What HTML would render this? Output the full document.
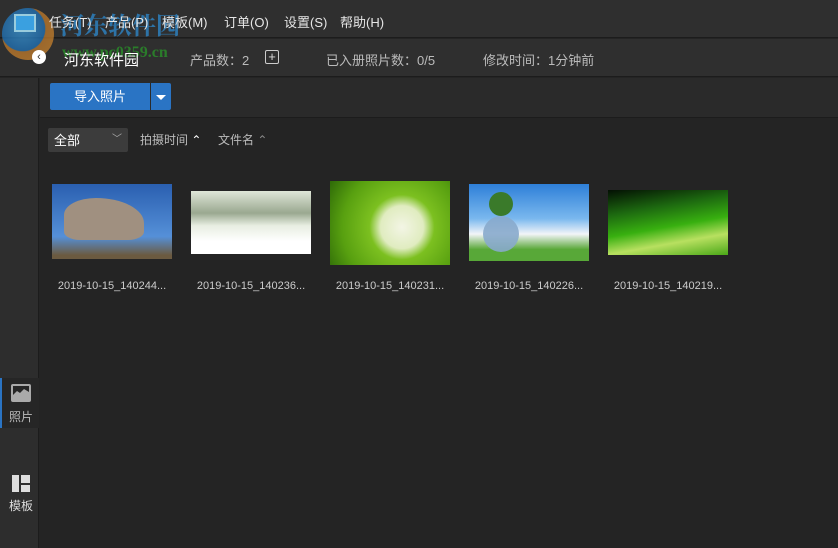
<!DOCTYPE html>
<html><head><meta charset="utf-8"><style>
*{margin:0;padding:0;box-sizing:border-box}
body{width:838px;height:548px;overflow:hidden;background:#242424;font-family:"Liberation Sans","Noto Sans CJK SC",sans-serif;color:#ddd;position:relative;font-size:12px}
.abs{position:absolute}
#menu{left:0;top:0;width:838px;height:38px;background:#2f2f2f;border-bottom:1px solid #1c1c1c}
#bar2{left:0;top:39px;width:838px;height:38px;background:#2f2f2f;border-bottom:1px solid #1c1c1c}
#side{left:0;top:78px;width:39px;height:470px;background:#2d2d2d;border-right:1px solid #1c1c1c}
#tool{left:40px;top:78px;width:798px;height:40px;background:#2a2a2a;border-bottom:1px solid #1c1c1c}
.m{top:12px;font-size:13px;color:#e6e6e6}
.t{font-size:11px;color:#ccc;top:280px;width:140px;text-align:center}
</style></head><body>
<div id="menu" class="abs"></div>
<div id="bar2" class="abs"></div>
<div id="side" class="abs"></div>
<div id="tool" class="abs"></div>
<div class="abs" style="left:2px;top:8px;width:52px;height:52px;border-radius:50%;background:radial-gradient(circle at 40% 40%,#3d9ad8 0,#1f72b8 50%,#c07a2a 52%,#d08a30 100%);opacity:.75"></div>
<div class="abs" style="left:14px;top:14px;width:22px;height:18px;background:#3aa0e0;border:2px solid #9cd"></div>
<div class="abs" style="left:60px;top:6px;font-size:24px;font-weight:bold;color:#2d8ad0;opacity:.75;font-family:'Noto Serif CJK SC',serif">河东软件园</div>
<div class="abs" style="left:62px;top:44px;font-size:16px;font-weight:bold;color:#2a8a2a;opacity:.85;font-family:'Liberation Serif',serif">www.pc0359.cn</div>
<div class="abs m" style="left:49px">任务(T)</div>
<div class="abs m" style="left:105px">产品(P)</div>
<div class="abs m" style="left:162px">模板(M)</div>
<div class="abs m" style="left:224px">订单(O)</div>
<div class="abs m" style="left:284px">设置(S)</div>
<div class="abs m" style="left:340px">帮助(H)</div>
<div class="abs" style="left:32px;top:50px;width:14px;height:14px;border-radius:50%;background:#fff;color:#333;font-size:11px;line-height:14px;text-align:center">‹</div>
<div class="abs" style="left:64px;top:49px;font-size:15px;color:#fff">河东软件园</div>
<div class="abs" style="left:190px;top:50px;font-size:13px;color:#bbb">产品数：2</div>
<div class="abs" style="left:265px;top:50px;width:14px;height:14px;border:1.5px solid #ccc;border-radius:2px;color:#ddd;font-size:13px;line-height:11px;text-align:center">+</div>
<div class="abs" style="left:326px;top:50px;font-size:13px;color:#bbb">已入册照片数：0/5</div>
<div class="abs" style="left:483px;top:50px;font-size:13px;color:#bbb">修改时间：1分钟前</div>
<div class="abs" style="left:50px;top:83px;width:100px;height:27px;background:#2a74c4;border-radius:2px 0 0 2px;color:#fff;font-size:13px;line-height:27px;text-align:center">导入照片</div>
<div class="abs" style="left:151px;top:83px;width:20px;height:27px;background:#2a74c4;border-radius:0 2px 2px 0"></div>
<div class="abs" style="left:156px;top:95px;width:0;height:0;border-left:5px solid transparent;border-right:5px solid transparent;border-top:5px solid #fff"></div>
<div class="abs" style="left:48px;top:128px;width:80px;height:24px;background:#3c3c3c;border-radius:2px;color:#fff;font-size:13px;line-height:26px;padding-left:6px">全部<span style="position:absolute;left:64px;top:-1px;color:#aaa;font-size:10px">﹀</span></div>
<div class="abs" style="left:140px;top:131px;font-size:12px;color:#bbb">拍摄时间 <span style="color:#fff">⌃</span></div>
<div class="abs" style="left:218px;top:131px;font-size:12px;color:#bbb">文件名 <span style="color:#888">⌃</span></div>
<div class="abs" style="left:0;top:378px;width:39px;height:50px;background:#262626"></div>
<div class="abs" style="left:0;top:378px;width:2px;height:50px;background:#2a74c4"></div>
<svg class="abs" style="left:11px;top:384px" width="20" height="18" viewBox="0 0 20 18"><rect x="0" y="0" width="20" height="18" rx="2" fill="#aaa"/><rect x="2" y="2" width="16" height="9" fill="#262626"/><path d="M2 11 L6 7 L9 9 L13 5 L18 8 L18 16 L2 16Z" fill="#aaa"/></svg>
<div class="abs" style="left:9px;top:408px;font-size:12px;color:#bbb">照片</div>
<div class="abs" style="left:12px;top:475px;width:7px;height:17px;background:#ddd"></div>
<div class="abs" style="left:21px;top:475px;width:9px;height:8px;background:#ddd"></div>
<div class="abs" style="left:21px;top:485px;width:9px;height:7px;background:#ddd"></div>
<div class="abs" style="left:9px;top:497px;font-size:12px;color:#ddd">模板</div>
<div class="abs" style="left:52px;top:184px;width:120px;height:75px;background:linear-gradient(180deg,#2a5fb0,#5590d8 70%,#6b5a40 95%)"><div style="position:absolute;left:12px;top:14px;width:80px;height:42px;background:#a09080;border-radius:40% 60% 20% 20%"></div></div>
<div class="abs" style="left:191px;top:191px;width:120px;height:63px;background:linear-gradient(180deg,#dfe6d8,#9aa890 35%,#e8eee2 55%,#fff 80%)"></div>
<div class="abs" style="left:330px;top:181px;width:120px;height:84px;background:radial-gradient(circle at 60% 55%,#f3f5e5 0,#e0ecc0 25%,#7cc020 38%,#58a010 70%,#2e6a08 100%)"></div>
<div class="abs" style="left:469px;top:184px;width:120px;height:77px;background:linear-gradient(180deg,#2e7fd8,#7ab8ee 45%,#f2f4f8 65%,#58a838 85%)"><div style="position:absolute;left:14px;top:32px;width:36px;height:36px;border-radius:50%;background:#8ac;opacity:.9"></div><div style="position:absolute;left:20px;top:8px;width:24px;height:24px;border-radius:50%;background:#3a7a2a"></div></div>
<div class="abs" style="left:608px;top:190px;width:120px;height:65px;background:linear-gradient(170deg,#031003,#1d6a10 30%,#38b010 55%,#b8e060 75%,#4aa818)"></div>
<div class="abs t" style="left:42px">2019-10-15_140244...</div>
<div class="abs t" style="left:181px">2019-10-15_140236...</div>
<div class="abs t" style="left:320px">2019-10-15_140231...</div>
<div class="abs t" style="left:459px">2019-10-15_140226...</div>
<div class="abs t" style="left:598px">2019-10-15_140219...</div>
</body></html>
